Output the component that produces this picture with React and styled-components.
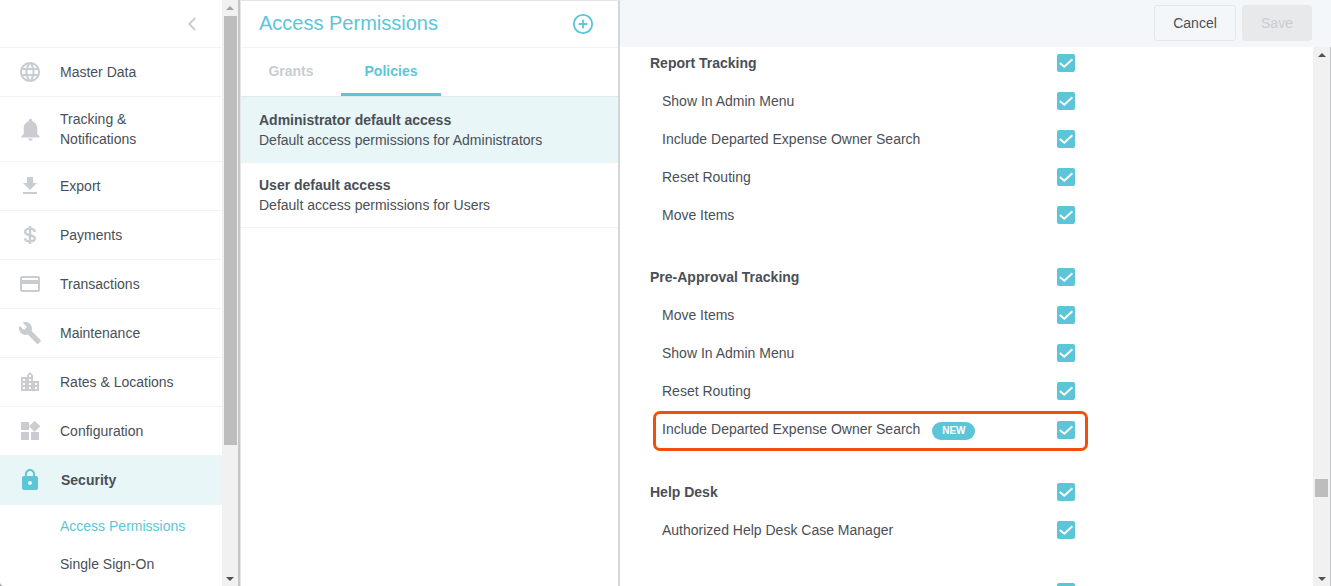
import React from 'react';
import styled, { createGlobalStyle } from 'styled-components';
import { ChevronLeft, CirclePlus } from 'lucide-react';
import {
  MdLanguage,
  MdNotifications,
  MdFileDownload,
  MdCreditCard,
  MdBuild,
  MdLocationCity,
  MdWidgets,
  MdLock,
} from 'react-icons/md';

const teal = '#5cc6d8';
const tealWash = '#e8f6f8';
const ink = '#4a4f57';
const mute = '#c9cdd2';
const line = '#f1f3f5';

const GlobalStyle = createGlobalStyle`
  html, body {
    margin: 0;
    height: 100%;
    background: #9a9a9a;
    overflow: hidden;
  }
  body {
    font-family: "Liberation Sans", Arial, sans-serif;
    font-size: 14px;
    color: ${ink};
  }
  #root {
    height: 100%;
  }
`;

const Page = styled.div`
  display: grid;
  grid-template-columns: 222px 18px 380px 1fr;
  width: 1331px;
  height: 586px;
  overflow: hidden;
  background: #fff;
  border-bottom-left-radius: 4px;
`;

const Sidebar = styled.nav`
  display: flex;
  flex-direction: column;
  height: 586px;
  overflow: hidden;
`;

const CollapseBar = styled.div`
  display: flex;
  justify-content: flex-end;
  align-items: center;
  flex: none;
  height: 47px;
  padding-right: 19px;
  border-bottom: 1px solid ${line};
  color: ${mute};
`;

const NavRow = styled.div`
  display: flex;
  align-items: center;
  flex: none;
  box-sizing: border-box;
  height: ${p => p.$height || 49}px;
  padding-left: 18px;
  gap: 18px;
  line-height: 20px;
  border-bottom: 1px solid ${p => (p.$active ? tealWash : line)};
  background: ${p => (p.$active ? tealWash : 'transparent')};
  font-weight: ${p => (p.$active ? 700 : 400)};
`;

const IconSlot = styled.span`
  display: flex;
  align-items: center;
  justify-content: center;
  flex: none;
  width: 24px;
  height: 24px;
  color: ${p => (p.$active ? teal : mute)};

  svg {
    flex: none;
  }
`;

const NavText = styled.span`
  color: ${ink};
  max-width: ${p => (p.$narrow ? '100px' : 'none')};
  margin-left: ${p => (p.$active ? 1 : 0)}px;
`;

const SubNav = styled.div`
  display: flex;
  flex-direction: column;
  flex: none;
  padding: 2px 0 0 60px;
`;

const SubItem = styled.div`
  height: 38px;
  line-height: 38px;
  color: ${p => (p.$active ? teal : ink)};
`;

const ScrollTrack = styled.div`
  display: flex;
  flex-direction: column;
  align-items: center;
  height: ${p => p.$height}px;
  background: #f1f1f1;
  border-right: ${p => p.$edge}px solid #c4c6c8;
  box-sizing: border-box;
`;

const ScrollArrow = styled.div`
  flex: none;
  width: 0;
  height: 0;
  margin: ${p => (p.$down ? 'auto 0 5px' : '6px 0 0')};
  border-left: 4px solid transparent;
  border-right: 4px solid transparent;
  border-bottom: ${p => (p.$down ? '0' : `4px solid ${p.$dim ? '#a3a3a3' : '#505050'}`)};
  border-top: ${p => (p.$down ? '4px solid #505050' : '0')};
`;

const ScrollThumb = styled.div`
  flex: none;
  width: 13px;
  height: ${p => p.$height}px;
  margin-top: ${p => p.$top}px;
  background: #bdbdbd;
`;

const Middle = styled.section`
  display: flex;
  flex-direction: column;
  height: 586px;
  box-sizing: border-box;
  border-left: 1px solid #e4e6e8;
  border-right: 2px solid #d4d6d8;
  border-top: 1px solid #e4e6e8;
`;

const MiddleHead = styled.header`
  display: flex;
  align-items: center;
  justify-content: space-between;
  flex: none;
  box-sizing: border-box;
  height: 47px;
  padding: 0 24px 0 18px;
  border-bottom: 1px solid ${line};
  color: ${teal};
`;

const Title = styled.h1`
  margin: 0 0 2px;
  font-size: 20px;
  font-weight: 400;
  color: ${teal};
`;

const Tabs = styled.div`
  display: flex;
  flex: none;
  height: 49px;
  box-sizing: border-box;
  border-bottom: 1px solid #e4e7ea;
`;

const Tab = styled.div`
  width: 100px;
  text-align: center;
  box-sizing: border-box;
  line-height: 46px;
  font-weight: 700;
  color: ${p => (p.$active ? teal : mute)};
  border-bottom: 3px solid ${p => (p.$active ? teal : 'transparent')};
`;

const Policy = styled.div`
  flex: none;
  box-sizing: border-box;
  height: ${p => (p.$active ? 66 : 65)}px;
  padding: ${p => (p.$active ? 13 : 12)}px 18px 0;
  line-height: 20px;
  background: ${p => (p.$active ? tealWash : 'transparent')};
  border-bottom: ${p => (p.$active ? 'none' : `1px solid ${line}`)};
`;

const PolicyName = styled.div`
  font-weight: 700;
`;

const Detail = styled.section`
  display: flex;
  flex-direction: column;
  height: 586px;
  min-width: 0;
`;

const TopBar = styled.div`
  display: flex;
  justify-content: flex-end;
  align-items: center;
  flex: none;
  gap: 6px;
  height: 47px;
  padding: 0 19px 1px 0;
  box-sizing: border-box;
  background: #f3f7fa;
`;

const Button = styled.button`
  height: 36px;
  width: ${p => p.$width}px;
  padding: 0;
  border-radius: 3px;
  font: inherit;
  border: 1px solid ${p => (p.$disabled ? '#e8e9ea' : '#e3e7ea')};
  background: ${p => (p.$disabled ? '#e8e9ea' : 'transparent')};
  color: ${p => (p.$disabled ? mute : ink)};
`;

const DetailBody = styled.div`
  display: grid;
  grid-template-columns: 1fr 18px;
  flex: 1;
  min-height: 0;
`;

const Settings = styled.div`
  overflow: hidden;
`;

const SettingsInner = styled.div`
  margin: -3px 0 0 30px;
  width: 425px;
`;

const Group = styled.div`
  margin-bottom: 24px;
`;

const Row = styled.div`
  position: relative;
  display: flex;
  align-items: center;
  height: ${p => p.$height || 38}px;
  padding-left: ${p => (p.$heading ? 0 : 12)}px;
  font-weight: ${p => (p.$heading ? 700 : 400)};
`;

const RowLabel = styled.span`
  flex: 1;
  display: flex;
  align-items: center;
  gap: 12px;
`;

const LabelText = styled.span`
  padding-bottom: ${p => (p.$lift ? 2 : 0)}px;
`;

const Badge = styled.span`
  width: 43px;
  height: 18px;
  line-height: 18px;
  border-radius: 9px;
  margin-top: 2px;
  text-align: center;
  font-size: 10px;
  font-weight: 700;
  background: ${teal};
  color: #fff;
`;

const Box = styled.span`
  display: flex;
  flex: none;
  width: 18px;
  height: 18px;
  border-radius: 2px;
  background: ${teal};
`;

const Callout = styled.div`
  position: absolute;
  left: 3px;
  right: -13px;
  top: 1px;
  bottom: -2px;
  border: 3px solid #f44e0e;
  border-radius: 7px;
  pointer-events: none;
`;

const Check = () => (
  <Box>
    <svg width="18" height="18" viewBox="0 0 18 18" fill="none">
      <path d="M2.8 9 7.3 12.8 15.4 5.2" stroke="#fff" strokeWidth="1.9" />
    </svg>
  </Box>
);

const DollarIcon = ({ size = 24 }) => (
  <svg width={size} height={size} viewBox="0 0 24 24" fill="none" stroke="currentColor" strokeWidth="2.4">
    <path d="M16.8 9C16.8 7 14.8 5.6 12 5.6S7.2 7 7.2 9C7.2 11 9 11.6 12 12.2S16.8 13.4 16.8 15.3C16.8 17.2 14.8 18.4 12 18.4S7.2 17.2 7.2 15.2" />
    <path d="M12 3V21" />
  </svg>
);

const nav = [
  { label: 'Master Data', Icon: MdLanguage, height: 49 },
  { label: 'Tracking & Notifications', Icon: MdNotifications, size: 27, height: 65, narrow: true },
  { label: 'Export', Icon: MdFileDownload },
  { label: 'Payments', Icon: DollarIcon },
  { label: 'Transactions', Icon: MdCreditCard },
  { label: 'Maintenance', Icon: MdBuild },
  { label: 'Rates & Locations', Icon: MdLocationCity },
  { label: 'Configuration', Icon: MdWidgets },
];

const groups = [
  {
    title: 'Report Tracking',
    rows: ['Show In Admin Menu', 'Include Departed Expense Owner Search', 'Reset Routing', 'Move Items'],
  },
  {
    title: 'Pre-Approval Tracking',
    rows: ['Move Items', 'Show In Admin Menu', 'Reset Routing', { label: 'Include Departed Expense Owner Search', isNew: true }],
  },
  {
    title: 'Help Desk',
    rows: ['Authorized Help Desk Case Manager'],
  },
];

const App = () => {
  return (
    <>
      <GlobalStyle />
      <Page>
        <Sidebar>
          <CollapseBar>
            <ChevronLeft size={22} strokeWidth={2} />
          </CollapseBar>
          {nav.map(({ label, Icon, size, height, narrow }) => (
            <NavRow key={label} $height={height}>
              <IconSlot>
                <Icon size={size || 24} />
              </IconSlot>
              <NavText $narrow={narrow}>{label}</NavText>
            </NavRow>
          ))}
          <NavRow $active>
            <IconSlot $active>
              <MdLock size={24} />
            </IconSlot>
            <NavText $active>Security</NavText>
          </NavRow>
          <SubNav>
            <SubItem $active>Access Permissions</SubItem>
            <SubItem>Single Sign-On</SubItem>
          </SubNav>
        </Sidebar>

        <ScrollTrack $height={586} $edge={2}>
          <ScrollArrow $dim />
          <ScrollThumb $top={6} $height={429} />
          <ScrollArrow $down />
        </ScrollTrack>

        <Middle>
          <MiddleHead>
            <Title>Access Permissions</Title>
            <CirclePlus size={22} strokeWidth={2} />
          </MiddleHead>
          <Tabs>
            <Tab>Grants</Tab>
            <Tab $active>Policies</Tab>
          </Tabs>
          <Policy $active>
            <PolicyName>Administrator default access</PolicyName>
            <div>Default access permissions for Administrators</div>
          </Policy>
          <Policy>
            <PolicyName>User default access</PolicyName>
            <div>Default access permissions for Users</div>
          </Policy>
        </Middle>

        <Detail>
          <TopBar>
            <Button $width={82}>Cancel</Button>
            <Button $width={70} $disabled>Save</Button>
          </TopBar>
          <DetailBody>
            <Settings>
              <SettingsInner>
                {groups.map(group => (
                  <Group key={group.title}>
                    <Row $heading>
                      <RowLabel>{group.title}</RowLabel>
                      <Check />
                    </Row>
                    {group.rows.map(row => {
                      const label = row.label || row;
                      return (
                        <Row key={label} $height={row.isNew ? 39 : 38}>
                          <RowLabel>
                            <LabelText $lift={row.isNew}>{label}</LabelText>
                            {row.isNew && <Badge>NEW</Badge>}
                          </RowLabel>
                          <Check />
                          {row.isNew && <Callout />}
                        </Row>
                      );
                    })}
                  </Group>
                ))}
                <Row $heading>
                  <RowLabel />
                  <Check />
                </Row>
              </SettingsInner>
            </Settings>
            <ScrollTrack $height={539} $edge={1}>
              <ScrollArrow />
              <ScrollThumb $top={422} $height={18} />
              <ScrollArrow $down />
            </ScrollTrack>
          </DetailBody>
        </Detail>
      </Page>
    </>
  );
};

export default App;
